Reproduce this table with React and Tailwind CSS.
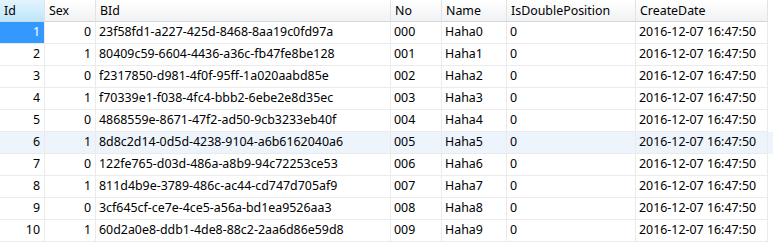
import React from "react";

const rows = [
  ["1", "0", "23f58fd1-a227-425d-8468-8aa19c0fd97a", "000", "Haha0", "0"],
  ["2", "1", "80409c59-6604-4436-a36c-fb47fe8be128", "001", "Haha1", "0"],
  ["3", "0", "f2317850-d981-4f0f-95ff-1a020aabd85e", "002", "Haha2", "0"],
  ["4", "1", "f70339e1-f038-4fc4-bbb2-6ebe2e8d35ec", "003", "Haha3", "0"],
  ["5", "0", "4868559e-8671-47f2-ad50-9cb3233eb40f", "004", "Haha4", "0"],
  ["6", "1", "8d8c2d14-0d5d-4238-9104-a6b6162040a6", "005", "Haha5", "0"],
  ["7", "0", "122fe765-d03d-486a-a8b9-94c72253ce53", "006", "Haha6", "0"],
  ["8", "1", "811d4b9e-3789-486c-ac44-cd747d705af9", "007", "Haha7", "0"],
  ["9", "0", "3cf645cf-ce7e-4ce5-a56a-bd1ea9526aa3", "008", "Haha8", "0"],
  ["10", "1", "60d2a0e8-ddb1-4de8-88c2-2aa6d86e59d8", "009", "Haha9", "0"],
];

const cols = ["Id", "Sex", "BId", "No", "Name", "IsDoublePosition", "CreateDate"];
const grid = "grid grid-cols-[45px_51px_295px_51px_65px_129px_132px]";

export default function App() {
  return (
    <div
      className="w-[773px] h-[248px] bg-white text-[12.4px] text-black overflow-hidden"
      style={{ fontFamily: '"Noto Sans", "Liberation Sans", sans-serif' }}
    >
      <div className={`${grid} h-[22px]`}>
        {cols.map((c, i) => (
          <div
            key={c}
            className={`flex items-center px-[4px] pt-[1px] border-r border-b border-[#e3e3e3] border-b-[#d5d5d5] leading-none ${
              i === 0
                ? "bg-gradient-to-b from-[#e3f4fd] to-[#bde6fb]"
                : "bg-gradient-to-b from-[#ffffff] to-[#f1f2f4]"
            }`}
          >
            {c}
          </div>
        ))}
      </div>
      {rows.map((r, ri) => (
        <div
          key={r[0]}
          className={`${grid} h-[22px] ${ri === 5 ? "bg-[#eef4fb]" : ""}`}
        >
          <div
            className={`flex items-center justify-end px-[4px] border-r border-b border-[#ebebeb] ${
              ri === 0 ? "bg-[#3399ff] text-white" : ""
            }`}
          >
            {r[0]}
          </div>
          <div className="flex items-center justify-end px-[4px] border-r border-b border-[#ebebeb]">{r[1]}</div>
          <div className="flex items-center px-[3px] border-r border-b border-[#ebebeb] whitespace-nowrap">{r[2]}</div>
          <div className="flex items-center px-[3px] border-r border-b border-[#ebebeb]">{r[3]}</div>
          <div className="flex items-center px-[3px] border-r border-b border-[#ebebeb]">{r[4]}</div>
          <div className="flex items-center px-[3px] border-r border-b border-[#ebebeb]">{r[5]}</div>
          <div className="flex items-center px-[3px] border-r border-b border-[#ebebeb]">2016-12-07 16:47:50</div>
        </div>
      ))}
    </div>
  );
}
